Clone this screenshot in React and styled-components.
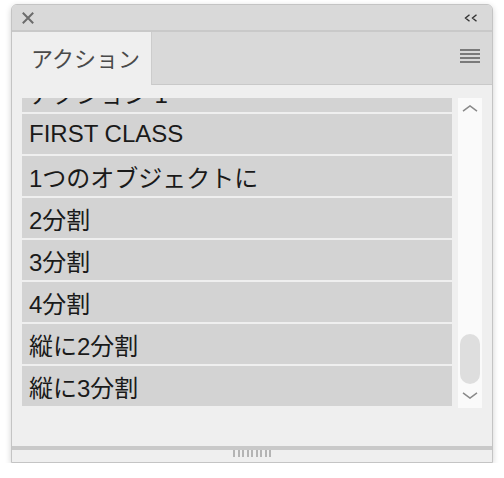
import React, { useLayoutEffect, useRef } from "react";
import styled, { createGlobalStyle } from "styled-components";

const Global = createGlobalStyle`
  html, body { margin: 0; padding: 0; background: #ffffff; }
  body { font-family: "Liberation Sans", "Noto Sans CJK JP", sans-serif; }
`;

const Stage = styled.div`
  padding: 4px 0 0 11px;
`;

const Panel = styled.div`
  width: 482px;
  height: 459px;
  box-sizing: border-box;
  border: 1px solid #c4c4c4;
  border-radius: 6px 6px 0 0;
  background: #efefef;
  box-shadow: 0 2px 6px rgba(0, 0, 0, 0.18);
  display: flex;
  flex-direction: column;
  overflow: hidden;
`;

const TitleBar = styled.div`
  height: 25px;
  flex: none;
  background: #d9d9d9;
  border-bottom: 2px solid #c9c9c9;
  display: flex;
  align-items: center;
  justify-content: space-between;
  padding: 0 14px 0 10px;
`;

const IconBtn = styled.div`
  display: flex;
  align-items: center;
  justify-content: center;
`;

const TabRow = styled.div`
  height: 53px;
  flex: none;
  display: flex;
  background: #d9d9d9;
  box-shadow: inset 0 -1px 0 #c9c9c9;
`;

const Tab = styled.div`
  width: 140px;
  background: #efefef;
  border-right: 1px solid #cccccc;
  display: flex;
  align-items: center;
  padding-left: 19px;
  padding-bottom: 4px;
  box-sizing: border-box;
  font-family: "Noto Sans CJK JP", sans-serif;
  font-size: 22px;
  color: #4a4a4a;
`;

const TabFill = styled.div`
  flex: 1;
  display: flex;
  align-items: center;
  justify-content: flex-end;
  padding-right: 12px;
  padding-bottom: 6px;
`;

const Content = styled.div`
  flex: 1;
  display: flex;
  gap: 6px;
  padding: 13px 10px 0 10px;
  background: #efefef;
`;

const ListViewport = styled.div`
  width: 430px;
  height: 310px;
  overflow: hidden;
  scrollbar-width: none;
  &::-webkit-scrollbar { display: none; }
`;

const List = styled.div`
  display: flex;
  flex-direction: column;
  gap: 2px;
`;

const Row = styled.div`
  height: 40px;
  flex: none;
  background: #d3d3d3;
  display: flex;
  align-items: center;
  padding-left: 7px;
  font-family: "Liberation Sans", "Noto Sans CJK JP", sans-serif;
  font-size: 24px;
  color: #1a1a1a;
  white-space: nowrap;
`;

const Track = styled.div`
  width: 24px;
  height: 310px;
  background: #fafafa;
  display: flex;
  flex-direction: column;
  align-items: center;
`;

const Arrow = styled.div`
  height: ${(p) => p.$h}px;
  padding-top: ${(p) => p.$pt}px;
  box-sizing: border-box;
  flex: none;
  display: flex;
  justify-content: center;
  align-items: flex-start;
`;

const ThumbArea = styled.div`
  flex: 1;
  display: flex;
  flex-direction: column;
  justify-content: flex-end;
  padding-bottom: 2px;
`;

const Thumb = styled.div`
  width: 20px;
  height: 50px;
  border-radius: 10px;
  background: #dedede;
`;

const BottomBar = styled.div`
  height: 12px;
  flex: none;
  border-top: 4px solid #c9c9c9;
  background: #efefef;
  display: flex;
  justify-content: center;
`;

const Grip = styled.div`
  display: flex;
  gap: 2.5px;
  height: 7px;
`;

const GripLine = styled.div`
  width: 2px;
  height: 7px;
  background: #b4b4b4;
`;

const rows = [
  "アクション 1",
  "FIRST CLASS",
  "1つのオブジェクトに",
  "2分割",
  "3分割",
  "4分割",
  "縦に2分割",
  "縦に3分割",
  "縦に4分割",
];

export default function App() {
  const vp = useRef(null);
  useLayoutEffect(() => {
    if (vp.current) vp.current.scrollTop = 26;
  }, []);
  return (
    <>
      <Global />
      <Stage>
        <Panel>
          <TitleBar>
            <IconBtn>
              <svg width="12" height="12" viewBox="0 0 12 12">
                <path d="M0.8 0.8 L11.2 11.2 M11.2 0.8 L0.8 11.2" stroke="#6c6c6c" strokeWidth="2" fill="none" />
              </svg>
            </IconBtn>
            <IconBtn>
              <svg width="14" height="8" viewBox="0 0 14 8">
                <path d="M5.5 0.8 L1.5 4 L5.5 7.2 M12.5 0.8 L8.5 4 L12.5 7.2" stroke="#333" strokeWidth="1.4" fill="none" />
              </svg>
            </IconBtn>
          </TitleBar>
          <TabRow>
            <Tab>アクション</Tab>
            <TabFill>
              <svg width="20" height="14" viewBox="0 0 20 14">
                <g fill="#7a7a7a">
                  <rect x="0" y="0" width="20" height="2" />
                  <rect x="0" y="4" width="20" height="2" />
                  <rect x="0" y="8" width="20" height="2" />
                  <rect x="0" y="12" width="20" height="2" />
                </g>
              </svg>
            </TabFill>
          </TabRow>
          <Content>
            <ListViewport ref={vp}>
              <List>
                {rows.map((r) => (
                  <Row key={r}>{r}</Row>
                ))}
              </List>
            </ListViewport>
            <Track>
              <Arrow $h={20} $pt={7}>
                <svg width="16" height="7" viewBox="0 0 16 7">
                  <path d="M1 6.2 L8 0.9 L15 6.2" stroke="#8a8a8a" strokeWidth="1.5" fill="none" />
                </svg>
              </Arrow>
              <ThumbArea>
                <Thumb />
              </ThumbArea>
              <Arrow $h={22} $pt={6}>
                <svg width="16" height="7" viewBox="0 0 16 7">
                  <path d="M1 0.8 L8 6.1 L15 0.8" stroke="#8a8a8a" strokeWidth="1.5" fill="none" />
                </svg>
              </Arrow>
            </Track>
          </Content>
          <BottomBar>
            <Grip>
              {Array.from({ length: 9 }).map((_, i) => (
                <GripLine key={i} />
              ))}
            </Grip>
          </BottomBar>
        </Panel>
      </Stage>
    </>
  );
}
